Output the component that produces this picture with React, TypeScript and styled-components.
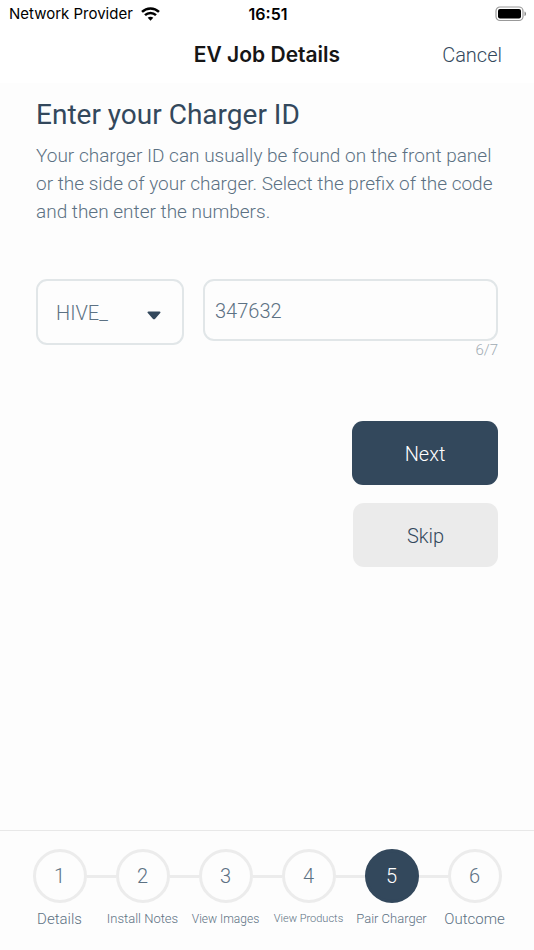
import React, { useState } from 'react';
import styled, { createGlobalStyle } from 'styled-components';

const navy = '#33485c';
const slate = '#5c7183';
const line = '#ececec';
const outline = '#e1e6e8';
const bodyFont = "Roboto, 'Open Sans', sans-serif";
const systemFont = 'Inter, sans-serif';

const GlobalStyle = createGlobalStyle`
  *, *::before, *::after { box-sizing: border-box; }
  body {
    margin: 0;
    background: #fdfdfd;
    color: ${slate};
    font-family: ${bodyFont};
    font-weight: 300;
  }
  button, input, select { font: inherit; color: inherit; margin: 0; }
`;

const Screen = styled.div`
  display: flex;
  flex-direction: column;
  min-height: 100vh;
`;

const StatusBar = styled.div`
  display: grid;
  grid-template-columns: 1fr auto 1fr;
  align-items: center;
  height: 27px;
  padding: 0 7px 0 9px;
  background: #fff;
  color: #000;
  font-family: ${systemFont};
  font-size: 15px;
  line-height: 20px;
  font-weight: 400;
`;

const Carrier = styled.span`
  display: flex;
  align-items: center;
  gap: 8px;
  white-space: nowrap;
`;

const Clock = styled.time`
  font-size: 16px;
  font-weight: 600;
`;

const BatteryIcon = styled.svg`
  justify-self: end;
`;

const NavBar = styled.header`
  display: grid;
  grid-template-columns: 1fr auto 1fr;
  align-items: center;
  height: 56px;
  padding: 0 32px;
  background: #fff;
`;

const NavTitle = styled.h1`
  grid-column: 2;
  margin: 0;
  color: #161616;
  font-family: ${systemFont};
  font-size: 21px;
  line-height: 28px;
  font-weight: 600;
`;

const CancelButton = styled.button`
  justify-self: end;
  padding: 0;
  border: 0;
  background: none;
  color: ${navy};
  font-size: 20px;
  line-height: 28px;
`;

const Content = styled.main`
  flex: 1;
  padding: 14px 36px 24px;
`;

const Heading = styled.h2`
  margin: 0;
  color: ${navy};
  font-size: 28px;
  line-height: 36px;
  font-weight: 400;
`;

const Intro = styled.p`
  margin: 9px 0 0;
  font-size: 19px;
  line-height: 28px;
`;

const Fields = styled.div`
  display: flex;
  align-items: flex-start;
  gap: 19px;
  margin-top: 53px;
`;

const PrefixField = styled.div`
  display: grid;
  flex: 0 0 148px;
  align-items: center;

  > * { grid-area: 1 / 1; }
`;

const PrefixSelect = styled.select`
  width: 100%;
  height: 66px;
  padding: 2px 40px 0 18px;
  border: 2px solid ${outline};
  border-radius: 11px;
  background: transparent;
  appearance: none;
  font-size: 20px;
`;

const Caret = styled.svg`
  justify-self: end;
  margin: 6px 23px 0 0;
  pointer-events: none;
`;

const NumberField = styled.div`
  display: flex;
  flex: 1;
  flex-direction: column;
  min-width: 0;
`;

const NumberInput = styled.input`
  width: 100%;
  height: 62px;
  padding: 2px 10px 0;
  border: 2px solid ${outline};
  border-radius: 11px;
  background: transparent;
  font-size: 20px;
`;

const Counter = styled.span`
  align-self: flex-end;
  color: #a0abb3;
  font-size: 15px;
  line-height: 18px;
`;

const Actions = styled.div`
  display: flex;
  flex-direction: column;
  align-items: flex-end;
  gap: 18px;
  margin-top: 62px;
`;

const ActionButton = styled.button<{ $primary?: boolean }>`
  width: ${(p) => (p.$primary ? 146 : 145)}px;
  height: 64px;
  padding: 2px 0 0;
  border: 0;
  border-radius: 11px;
  background: ${(p) => (p.$primary ? navy : '#ebebeb')};
  color: ${(p) => (p.$primary ? '#fff' : navy)};
  font-size: 20px;
`;

const Footer = styled.nav`
  padding: 18px 18px 21px;
  border-top: 1px solid #e8e8e8;
`;

const Steps = styled.ol`
  display: grid;
  grid-template-columns: repeat(6, 1fr);
  margin: 0;
  padding: 0;
  list-style: none;
`;

const Step = styled.li`
  display: flex;
  flex-direction: column;
  min-width: 0;
`;

const StepTrack = styled.div`
  display: flex;
  align-items: center;

  &::before, &::after {
    content: '';
    flex: 1;
    height: 3px;
    background: ${line};
  }
  ${Step}:first-child &::before, ${Step}:last-child &::after { background: none; }
`;

const StepButton = styled.button<{ $active: boolean }>`
  width: 54px;
  height: 54px;
  padding: 0;
  border: 3px solid ${(p) => (p.$active ? navy : line)};
  border-radius: 50%;
  background: ${(p) => (p.$active ? navy : 'transparent')};
  color: ${(p) => (p.$active ? '#fff' : slate)};
  font-size: 20px;
`;

const StepLabel = styled.label<{ $size: number }>`
  align-self: center;
  margin-top: 6px;
  font-size: ${(p) => p.$size}px;
  line-height: 20px;
  white-space: nowrap;
`;

const steps = [
  { name: 'Details', size: 15 },
  { name: 'Install Notes', size: 13 },
  { name: 'View Images', size: 12 },
  { name: 'View Products', size: 11 },
  { name: 'Pair Charger', size: 13 },
  { name: 'Outcome', size: 15 },
];

const maxDigits = 7;

export default function App() {
  const [number, setNumber] = useState('347632');
  const [active, setActive] = useState(4);

  return (
    <Screen>
      <GlobalStyle />
      <StatusBar>
        <Carrier>
          Network Provider
          <svg width="19" height="14" viewBox="0 0 19 14" fill="none" stroke="#000" strokeWidth="2.5" aria-hidden="true">
            <path d="M1 4.9C5.8.3 13.2.3 18 4.9" />
            <path d="M4 8.2c3.1-2.9 7.900-2.900 11 0" />
            <path d="M6.700 10.800c1.600-1.500 4-1.500 5.600 0L9.500 13.700z" fill="#000" stroke="none" />
          </svg>
        </Carrier>
        <Clock>16:51</Clock>
        <BatteryIcon width="32" height="16" viewBox="0 0 32 16" aria-hidden="true">
          <rect x="1" y="1" width="27" height="13.500" rx="4" fill="none" stroke="#999" strokeWidth="1.200" />
          <rect x="3" y="3" width="23" height="9.500" rx="2" fill="#000" />
          <path d="M29.500 5.500c2 .6 2 4 0 4.600z" fill="#888" />
        </BatteryIcon>
      </StatusBar>
      <NavBar>
        <NavTitle>EV Job Details</NavTitle>
        <CancelButton type="button">Cancel</CancelButton>
      </NavBar>
      <Content>
        <Heading>Enter your Charger ID</Heading>
        <Intro>
          Your charger ID can usually be found on the front panel or the side of your charger. Select the prefix of the
          code and then enter the numbers.
        </Intro>
        <Fields>
          <PrefixField>
            <PrefixSelect aria-label="Charger ID prefix" defaultValue="HIVE_">
              <option>HIVE_</option>
            </PrefixSelect>
            <Caret width="14" height="9" viewBox="0 0 14 9" aria-hidden="true">
              <path d="M1.500.5h11c1 0 1.300.9.700 1.600L8.200 7.700c-.7.800-1.700.8-2.400 0L.8 2.100C.2 1.400.5.5 1.500.5z" fill={navy} />
            </Caret>
          </PrefixField>
          <NumberField>
            <NumberInput
              aria-label="Charger ID number"
              inputMode="numeric"
              maxLength={maxDigits}
              value={number}
              onChange={(e) => setNumber(e.target.value)}
            />
            <Counter>{`${number.length}/${maxDigits}`}</Counter>
          </NumberField>
        </Fields>
        <Actions>
          <ActionButton type="button" $primary>Next</ActionButton>
          <ActionButton type="button">Skip</ActionButton>
        </Actions>
      </Content>
      <Footer aria-label="Job steps">
        <Steps>
          {steps.map((step, i) => (
            <Step key={step.name}>
              <StepTrack>
                <StepButton
                  id={`step-${i + 1}`}
                  type="button"
                  $active={i === active}
                  aria-current={i === active ? 'step' : undefined}
                  onClick={() => setActive(i)}
                >
                  {i + 1}
                </StepButton>
              </StepTrack>
              <StepLabel htmlFor={`step-${i + 1}`} $size={step.size}>{step.name}</StepLabel>
            </Step>
          ))}
        </Steps>
      </Footer>
    </Screen>
  );
}
